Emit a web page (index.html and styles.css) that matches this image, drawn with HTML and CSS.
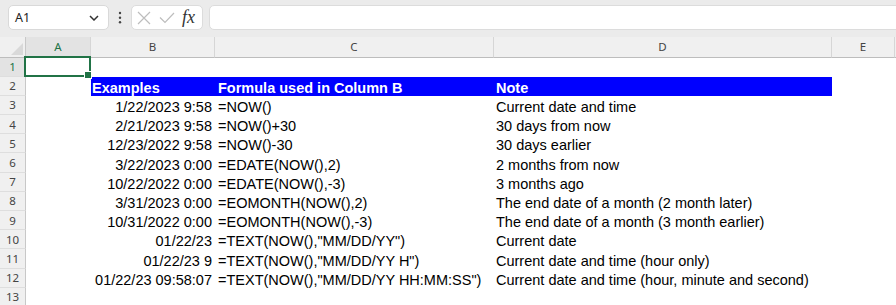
FILE: index.html
```html
<!DOCTYPE html>
<html lang="en">

<head>
    <meta charset="UTF-8">
    <title>NOW function examples</title>
    <link rel="stylesheet" href="styles.css">
</head>

<body>

    <!-- Formula bar -->
    <div class="toolbar">
        <div class="namebox">
            <span>A1</span>
            <svg class="chevron" width="10" height="6" viewBox="0 0 10 6"><path d="M1 1 L5 5 L9 1" fill="none" stroke="#333" stroke-width="1.5"/></svg>
        </div>
        <div class="dots">
            <svg width="4" height="14" viewBox="0 0 4 14"><circle cx="2" cy="2" r="1.2" fill="#444"/><circle cx="2" cy="6.7" r="1.2" fill="#444"/><circle cx="2" cy="11.2" r="1.2" fill="#444"/></svg>
        </div>
        <div class="fxbox">
            <svg width="14" height="14" viewBox="0 0 14 14"><path d="M1 1 L13 13 M13 1 L1 13" stroke="#bdbdbd" stroke-width="1.2"/></svg>
            <svg width="16" height="12" viewBox="0 0 16 12"><path d="M1 5.5 L6 10.5 L15 1" fill="none" stroke="#bdbdbd" stroke-width="1.2"/></svg>
            <span class="fx">fx</span>
        </div>
        <div class="formula"></div>
    </div>

    <!-- Grid -->
    <div class="sheet">
        <div class="row head">
            <div class="corner">
                <svg width="14" height="13" viewBox="0 0 14 13"><polygon points="13,0 13,12 1,12" fill="#d9d9d9"/></svg>
            </div>
            <div class="colhead sel">A</div>
            <div class="colhead">B</div>
            <div class="colhead">C</div>
            <div class="colhead">D</div>
            <div class="colhead">E</div>
            <div class="colhead last"></div>
        </div>

        <div class="row">
            <div class="rowhead sel">1</div>
            <div class="cell"></div><div class="cell"></div><div class="cell"></div><div class="cell"></div><div class="cell"></div>
        </div>
        <div class="row">
            <div class="rowhead">2</div>
            <div class="cell"></div>
            <div class="cell title">Examples</div>
            <div class="cell title c">Formula used in Column B</div>
            <div class="cell title d">Note</div>
            <div class="cell"></div>
        </div>
        <div class="row">
            <div class="rowhead">3</div>
            <div class="cell"></div>
            <div class="cell num">1/22/2023 9:58</div>
            <div class="cell c">=NOW()</div>
            <div class="cell d">Current date and time</div>
            <div class="cell"></div>
        </div>
        <div class="row">
            <div class="rowhead">4</div>
            <div class="cell"></div>
            <div class="cell num">2/21/2023 9:58</div>
            <div class="cell c">=NOW()+30</div>
            <div class="cell d">30 days from now</div>
            <div class="cell"></div>
        </div>
        <div class="row">
            <div class="rowhead">5</div>
            <div class="cell"></div>
            <div class="cell num">12/23/2022 9:58</div>
            <div class="cell c">=NOW()-30</div>
            <div class="cell d">30 days earlier</div>
            <div class="cell"></div>
        </div>
        <div class="row">
            <div class="rowhead">6</div>
            <div class="cell"></div>
            <div class="cell num">3/22/2023 0:00</div>
            <div class="cell c">=EDATE(NOW(),2)</div>
            <div class="cell d">2 months from now</div>
            <div class="cell"></div>
        </div>
        <div class="row">
            <div class="rowhead">7</div>
            <div class="cell"></div>
            <div class="cell num">10/22/2022 0:00</div>
            <div class="cell c">=EDATE(NOW(),-3)</div>
            <div class="cell d">3 months ago</div>
            <div class="cell"></div>
        </div>
        <div class="row">
            <div class="rowhead">8</div>
            <div class="cell"></div>
            <div class="cell num">3/31/2023 0:00</div>
            <div class="cell c">=EOMONTH(NOW(),2)</div>
            <div class="cell d">The end date of a month (2 month later)</div>
            <div class="cell"></div>
        </div>
        <div class="row">
            <div class="rowhead">9</div>
            <div class="cell"></div>
            <div class="cell num">10/31/2022 0:00</div>
            <div class="cell c">=EOMONTH(NOW(),-3)</div>
            <div class="cell d">The end date of a month (3 month earlier)</div>
            <div class="cell"></div>
        </div>
        <div class="row">
            <div class="rowhead">10</div>
            <div class="cell"></div>
            <div class="cell num">01/22/23</div>
            <div class="cell c">=TEXT(NOW(),"MM/DD/YY")</div>
            <div class="cell d">Current date</div>
            <div class="cell"></div>
        </div>
        <div class="row">
            <div class="rowhead">11</div>
            <div class="cell"></div>
            <div class="cell num">01/22/23 9</div>
            <div class="cell c">=TEXT(NOW(),"MM/DD/YY H")</div>
            <div class="cell d">Current date and time (hour only)</div>
            <div class="cell"></div>
        </div>
        <div class="row">
            <div class="rowhead">12</div>
            <div class="cell"></div>
            <div class="cell num">01/22/23 09:58:07</div>
            <div class="cell c">=TEXT(NOW(),"MM/DD/YY HH:MM:SS")</div>
            <div class="cell d">Current date and time (hour, minute and second)</div>
            <div class="cell"></div>
        </div>
        <div class="row">
            <div class="rowhead">13</div>
            <div class="cell"></div><div class="cell"></div><div class="cell"></div><div class="cell"></div><div class="cell"></div>
        </div>

        <!-- active cell A1 -->
        <div class="selection"><span class="handle"></span></div>
    </div>

</body>

</html>
```

FILE: styles.css
```css
body {
    margin: 0;
    background-color: #ffffff;
    font-family: "Liberation Sans", Arial, sans-serif;
    overflow: hidden;
}

/* formula bar */
.toolbar {
    display: flex;
    align-items: flex-start;
    height: 37px;
    box-sizing: border-box;
    padding: 5px 0 0 8px;
    background-color: #ebebeb;
    overflow: hidden;
}

.namebox {
    width: 101px;
    height: 25px;
    box-sizing: border-box;
    display: flex;
    align-items: center;
    justify-content: space-between;
    padding: 0 9px 0 6px;
    background-color: #ffffff;
    border: 1px solid #d9d9d9;
    border-radius: 5px;
    font-family: "Noto Sans", sans-serif;
    font-size: 12.5px;
    color: #222;
}

.chevron {
    margin-top: 1px;
}

.dots {
    width: 22px;
    display: flex;
    justify-content: center;
    padding-top: 6px;
}

.fxbox {
    width: 72px;
    height: 25px;
    box-sizing: border-box;
    display: flex;
    align-items: center;
    gap: 8px;
    padding-left: 5px;
    background-color: #ffffff;
    border: 1px solid #dcdcdc;
    border-radius: 5px;
}

.fx {
    margin-left: -1px;
    font-family: "Liberation Serif", serif;
    font-style: italic;
    font-size: 18px;
    color: #333;
}

.formula {
    flex: 1;
    height: 25px;
    margin-left: 6px;
    margin-right: -8px;
    box-sizing: border-box;
    background-color: #ffffff;
    border: 1px solid #dcdcdc;
    border-radius: 5px;
}

/* sheet grid */
.sheet {
    position: relative;
}

.row {
    display: grid;
    grid-template-columns: 26px 65px 124px 279px 338px 63px 1fr;
    height: 19.2px;
}

.row.head {
    height: 20.5px;
}

.corner,
.colhead {
    display: flex;
    align-items: center;
    justify-content: center;
    box-sizing: border-box;
    background-color: #f0f0f0;
    border-bottom: 1px solid #bdbdbd;
    border-right: 1px solid #d6d6d6;
    font-family: "Noto Sans", sans-serif;
    font-size: 11.5px;
    color: #444;
}

.corner {
    align-items: flex-end;
    justify-content: flex-end;
    padding: 0 1px 1px 0;
    border-right-color: #c8c8c8;
}

.colhead.last {
    border-right: none;
}

.rowhead {
    display: flex;
    align-items: center;
    justify-content: center;
    box-sizing: border-box;
    background-color: #f0f0f0;
    border-right: 1px solid #c8c8c8;
    border-bottom: 1px solid #dedede;
    font-family: "Noto Sans", sans-serif;
    font-size: 11.5px;
    color: #444;
}

.colhead.sel,
.rowhead.sel {
    background-color: #e3e3e3;
    color: #217346;
}

.cell {
    display: flex;
    align-items: flex-end;
    white-space: nowrap;
    font-size: 14.5px;
    line-height: 16px;
    color: #000;
}

.cell.num {
    justify-content: flex-end;
    padding-right: 3px;
}

.cell.c {
    padding-left: 3px;
}

.cell.d {
    padding-left: 2px;
}

.cell.title {
    background-color: #0000ff;
    color: #ffffff;
    font-weight: bold;
    padding-left: 1px;
}

.cell.title.c {
    padding-left: 3px;
}

.cell.title.d {
    padding-left: 2px;
}

.selection {
    position: absolute;
    left: 24px;
    top: 19px;
    width: 67px;
    height: 21px;
    box-sizing: border-box;
    border: 2px solid #217346;
}

.handle {
    position: absolute;
    right: -3px;
    bottom: -4px;
    width: 6px;
    height: 6px;
    background-color: #217346;
    border: 1px solid #ffffff;
}
```
